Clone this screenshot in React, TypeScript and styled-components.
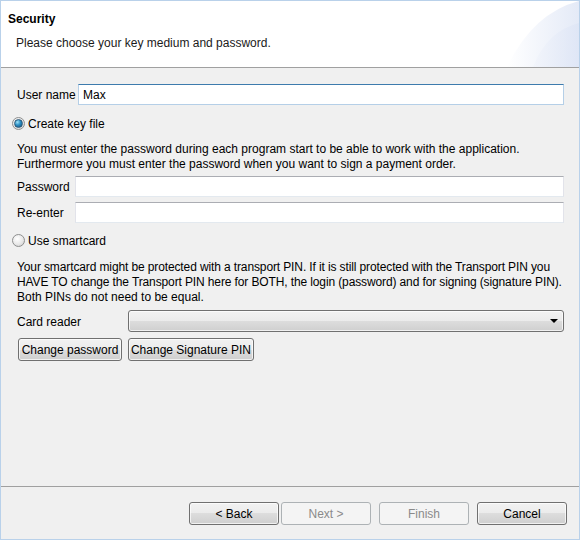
import React from "react"
import styled, { createGlobalStyle, css } from "styled-components"

const GlobalStyle = createGlobalStyle`
  html, body {
    margin: 0;
    padding: 0;
    background: #f0f0f0;
  }
  * {
    box-sizing: border-box;
  }
`

const Window = styled.div`
  width: 580px;
  height: 540px;
  border: 1px solid #b9d1ea;
  background: #f0f0f0;
  display: flex;
  flex-direction: column;
  font-family: "Liberation Sans", Arial, sans-serif;
  font-size: 12px;
  color: #000;
  overflow: hidden;
`

const Header = styled.div`
  position: relative;
  height: 67px;
  background: #fff;
  border-bottom: 1px solid #a0a0a0;
  padding: 10px 0 0 7px;
  overflow: hidden;
`

const Swoosh = styled.svg`
  position: absolute;
  right: 0;
  top: 0;
`

const Title = styled.div`
  font-weight: bold;
  font-size: 12px;
  line-height: 16px;
  position: relative;
`

const Subtitle = styled.div`
  margin: 8px 0 0 8px;
  line-height: 16px;
  color: #1a1a1a;
  position: relative;
`

const Content = styled.div`
  flex: 1;
  display: flex;
  flex-direction: column;
  padding: 16px 15px 0 16px;
`

const FieldRow = styled.div<{ $top?: number; $label: number }>`
  display: grid;
  grid-template-columns: ${(p) => p.$label}px 1fr;
  align-items: center;
  margin-top: ${(p) => p.$top ?? 0}px;
`

const Label = styled.label`
  line-height: 15px;
  padding-top: 2px;
  white-space: nowrap;
`

const TextInput = styled.input<{ $focused?: boolean }>`
  height: 21px;
  width: 100%;
  padding: 0 4px;
  font: inherit;
  color: #000;
  background: #fff;
  outline: none;
  border: 1px solid #e2e3ea;
  border-top-color: #abadb3;
  border-bottom-color: #e3e9ef;
  ${(p) =>
    p.$focused &&
    css`
      border-color: #b5cfe7;
      border-top-color: #3d7bad;
    `}
`

const RadioRow = styled.label<{ $top: number }>`
  display: flex;
  align-items: center;
  gap: 3px;
  height: 17px;
  white-space: nowrap;
  margin: ${(p) => p.$top}px 0 0 -5px;
`

const RadioDot = styled.span<{ $checked?: boolean }>`
  width: 13px;
  height: 13px;
  border-radius: 50%;
  border: 1px solid #8e8f8f;
  background: radial-gradient(circle at 40% 35%, #ffffff 0%, #e8e8e8 55%, #c8c8c8 100%);
  display: flex;
  align-items: center;
  justify-content: center;
  &::after {
    content: "";
    display: ${(p) => (p.$checked ? "block" : "none")};
    width: 7px;
    height: 7px;
    border-radius: 50%;
    background: radial-gradient(circle at 35% 30%, #9fe3f7 0%, #2b8ec4 45%, #13507a 100%);
    border: 1px solid #2e5a7a;
  }
`

const Paragraph = styled.p<{ $top: number }>`
  margin: ${(p) => p.$top}px 0 0 0;
  line-height: 15px;
  white-space: nowrap;
`

const Tight = styled.span`
  letter-spacing: -0.12px;
`

const buttonLook = css`
  height: 23px;
  font: inherit;
  color: #000;
  border: 1px solid #707070;
  border-radius: 3px;
  background: linear-gradient(#f2f2f2 0%, #ebebeb 50%, #dddddd 50%, #cfcfcf 100%);
  box-shadow: inset 0 0 0 1px rgba(255, 255, 255, 0.7);
  padding: 0;
  white-space: nowrap;
`

const Combo = styled.div`
  ${buttonLook};
  height: 22px;
  display: flex;
  align-items: center;
  justify-content: flex-end;
  padding-right: 5px;
`

const Arrow = styled.span`
  width: 0;
  height: 0;
  border-left: 4px solid transparent;
  border-right: 4px solid transparent;
  border-top: 4px solid #000;
`

const ButtonRow = styled.div`
  display: flex;
  gap: 6px;
  margin: 6px 0 0 1px;
`

const Button = styled.button<{ $w?: number }>`
  ${buttonLook};
  width: ${(p) => (p.$w ? `${p.$w}px` : "auto")};
  &:disabled {
    color: #8a8a8a;
    border-color: #adb2b5;
    background: #f4f4f4;
    box-shadow: none;
  }
`

const Footer = styled.div`
  height: 53px;
  border-top: 1px solid #a0a0a0;
  display: flex;
  justify-content: flex-end;
  align-items: flex-start;
  padding: 15px 12px 0 0;
`

const NavGroup = styled.div<{ $gap: number }>`
  display: flex;
  gap: ${(p) => p.$gap}px;
`

const FooterButtons = styled.div`
  display: flex;
  gap: 8px;
`

export default function App() {
  return (
    <>
      <GlobalStyle />
      <Window>
        <Header>
          <Swoosh width="72" height="66" viewBox="0 0 72 66">
            <defs>
              <linearGradient id="sw1" x1="0" y1="0" x2="1" y2="0">
                <stop offset="0" stopColor="#ffffff" />
                <stop offset="1" stopColor="#e4eaf7" />
              </linearGradient>
              <linearGradient id="sw2" x1="0" y1="0" x2="1" y2="0">
                <stop offset="0" stopColor="#f1f4fb" />
                <stop offset="1" stopColor="#dce4f5" />
              </linearGradient>
            </defs>
            <path d="M0 66 Q 26 12 72 0 L72 66 Z" fill="url(#sw1)" />
            <path d="M26 66 Q 40 30 72 22 L72 66 Z" fill="url(#sw2)" opacity="0.7" />
          </Swoosh>
          <Title>Security</Title>
          <Subtitle>Please choose your key medium and password.</Subtitle>
        </Header>

        <Content>
          <FieldRow $label={61}>
            <Label>User name</Label>
            <TextInput $focused defaultValue="Max" />
          </FieldRow>

          <RadioRow $top={10}>
            <RadioDot $checked />
            Create key file
          </RadioRow>

          <Paragraph $top={10}>
            You must enter the password during each program start to be able to work with the application.
            <br />
            Furthermore you must enter the password when you want to sign a payment order.
          </Paragraph>

          <FieldRow $label={58} $top={4}>
            <Label>Password</Label>
            <TextInput type="password" />
          </FieldRow>
          <FieldRow $label={58} $top={5}>
            <Label>Re-enter</Label>
            <TextInput type="password" />
          </FieldRow>

          <RadioRow $top={9}>
            <RadioDot />
            Use smartcard
          </RadioRow>

          <Paragraph $top={11}>
            <Tight>
              Your smartcard might be protected with a transport PIN. If it is still protected with the Transport PIN you
            </Tight>
            <br />
            <Tight>
              HAVE TO change the Transport PIN here for BOTH, the login (password) and for signing (signature PIN).
            </Tight>
            <br />
            Both PINs do not need to be equal.
          </Paragraph>

          <FieldRow $label={111} $top={5}>
            <Label>Card reader</Label>
            <Combo>
              <Arrow />
            </Combo>
          </FieldRow>

          <ButtonRow>
            <Button $w={104}>Change password</Button>
            <Button $w={126}>Change Signature PIN</Button>
          </ButtonRow>
        </Content>

        <Footer>
          <FooterButtons>
            <NavGroup $gap={2}>
              <Button $w={90}>&lt; Back</Button>
              <Button $w={90} disabled>
                Next &gt;
              </Button>
            </NavGroup>
            <Button $w={90} disabled>
              Finish
            </Button>
            <Button $w={90}>Cancel</Button>
          </FooterButtons>
        </Footer>
      </Window>
    </>
  )
}
